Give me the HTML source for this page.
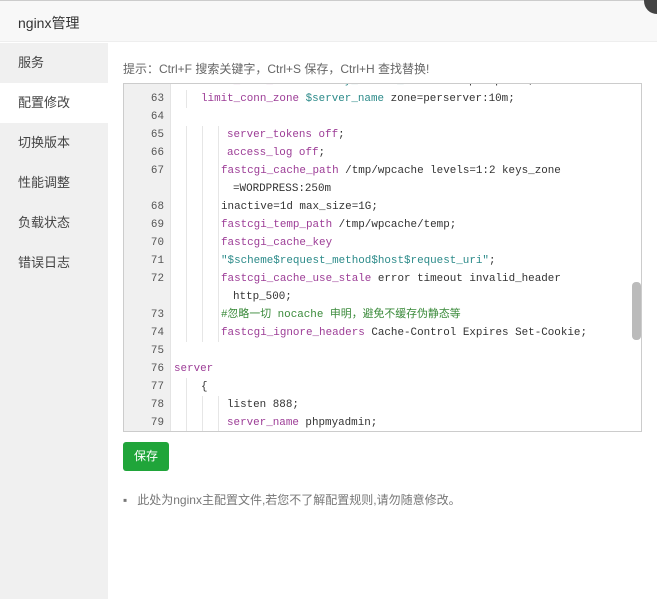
<!DOCTYPE html><html><head><meta charset="utf-8"><style>
body{margin:0;width:657px;height:599px;background:#fff;position:relative;overflow:hidden;font-family:"Liberation Sans","Noto Sans CJK SC",sans-serif;}
.top{position:absolute;left:0;top:0;width:657px;height:42px;background:#f8f8f8;border-top:1px solid #ccc;border-bottom:1px solid #eee;box-sizing:border-box}
.top span{position:absolute;left:18px;top:12px;font-size:14px;color:#333}
.close{position:absolute;left:644px;top:-12px;width:26px;height:26px;border-radius:50%;background:#444}
.side{position:absolute;left:0;top:43px;width:108px;height:556px;background:#f0f0f0}
.side div{height:40px;line-height:40px;padding-left:18px;font-size:13px;color:#444}
.side .a{background:#fff}
.tip{position:absolute;left:123px;top:60px;font-size:12px;color:#666}
.ed{position:absolute;left:123px;top:83px;width:519px;height:349px;border:1px solid #ccc;box-sizing:border-box;overflow:hidden;background:#fff}
.gut{position:absolute;left:0;top:0;width:46px;height:100%;background:#f0f0f0;border-right:1px solid #e4e4e4}
.l{position:absolute;left:0;height:18px;line-height:18px;font-family:"Liberation Mono","Noto Sans CJK SC",monospace;font-size:10.9px;color:#333;white-space:pre}
.n{position:absolute;left:0;width:40px;text-align:right;color:#555;font-family:"Liberation Mono",monospace;font-size:10.9px;height:18px;line-height:18px}
.k{color:#9c3c96}.v{color:#2b8a89}.s{color:#2b8a89}.c{color:#3a8a3a}
.g{position:absolute;width:0;border-left:1px solid #e6e6e6;height:18px}
.sb{position:absolute;left:508px;top:198px;width:9px;height:58px;background:#bbb;border-radius:4px}
.btn{position:absolute;left:123px;top:442px;width:46px;height:29px;background:#20a53a;border-radius:3px;color:#fff;font-size:12px;text-align:center;line-height:29px}
.note{position:absolute;left:123px;top:491px;font-size:12px;color:#777}
</style></head><body>
<div class="top"><span>nginx管理</span></div><div class="close"></div>
<div class="side"><div>服务</div><div class="a">配置修改</div><div>切换版本</div><div>性能调整</div><div>负载状态</div><div>错误日志</div></div>
<div class="tip">提示：Ctrl+F 搜索关键字，Ctrl+S 保存，Ctrl+H 查找替换!</div>
<div class="ed">
<div class="gut"></div>
<div class="n" style="top:-12px">62</div><div class="l" style="top:-12px;left:77px"><span class="k">limit_conn_zone</span> <span class="v">$binary_remote_addr</span> zone=perip:10m;</div>
<div class="n" style="top:6px">63</div><div class="l" style="top:6px;left:77px"><span class="k">limit_conn_zone</span> <span class="v">$server_name</span> zone=perserver:10m;</div>
<div class="n" style="top:24px">64</div>
<div class="n" style="top:42px">65</div><div class="l" style="top:42px;left:103px"><span class="k">server_tokens</span> <span class="k">off</span>;</div>
<div class="n" style="top:60px">66</div><div class="l" style="top:60px;left:103px"><span class="k">access_log</span> <span class="k">off</span>;</div>
<div class="n" style="top:78px">67</div><div class="l" style="top:78px;left:97px"><span class="k">fastcgi_cache_path</span> /tmp/wpcache levels=1:2 keys_zone</div>
<div class="l" style="top:96px;left:109px">=WORDPRESS:250m</div>
<div class="n" style="top:114px">68</div><div class="l" style="top:114px;left:97px">inactive=1d max_size=1G;</div>
<div class="n" style="top:132px">69</div><div class="l" style="top:132px;left:97px"><span class="k">fastcgi_temp_path</span> /tmp/wpcache/temp;</div>
<div class="n" style="top:150px">70</div><div class="l" style="top:150px;left:97px"><span class="k">fastcgi_cache_key</span></div>
<div class="n" style="top:168px">71</div><div class="l" style="top:168px;left:97px"><span class="s">"$scheme$request_method$host$request_uri"</span>;</div>
<div class="n" style="top:186px">72</div><div class="l" style="top:186px;left:97px"><span class="k">fastcgi_cache_use_stale</span> error timeout invalid_header</div>
<div class="l" style="top:204px;left:109px">http_500;</div>
<div class="n" style="top:222px">73</div><div class="l c" style="top:222px;left:97px">#忽略一切 nocache 申明，避免不缓存伪静态等</div>
<div class="n" style="top:240px">74</div><div class="l" style="top:240px;left:97px"><span class="k">fastcgi_ignore_headers</span> Cache-Control Expires Set-Cookie;</div>
<div class="n" style="top:258px">75</div>
<div class="n" style="top:276px">76</div><div class="l k" style="top:276px;left:50px">server</div>
<div class="n" style="top:294px">77</div><div class="l" style="top:294px;left:77px">{</div>
<div class="n" style="top:312px">78</div><div class="l" style="top:312px;left:103px">listen 888;</div>
<div class="n" style="top:330px">79</div><div class="l" style="top:330px;left:103px"><span class="k">server_name</span> phpmyadmin;</div>
<div class="g" style="left:62px;top:6px"></div>
<div class="g" style="left:62px;top:42px;height:216px"></div><div class="g" style="left:78px;top:42px;height:216px"></div><div class="g" style="left:94px;top:42px;height:216px"></div>
<div class="g" style="left:62px;top:294px;height:60px"></div><div class="g" style="left:78px;top:312px;height:40px"></div><div class="g" style="left:94px;top:312px;height:40px"></div>
<div class="sb"></div>
</div>
<div class="btn">保存</div>
<div class="note">▪ &nbsp; 此处为nginx主配置文件,若您不了解配置规则,请勿随意修改。</div>
</body></html>
